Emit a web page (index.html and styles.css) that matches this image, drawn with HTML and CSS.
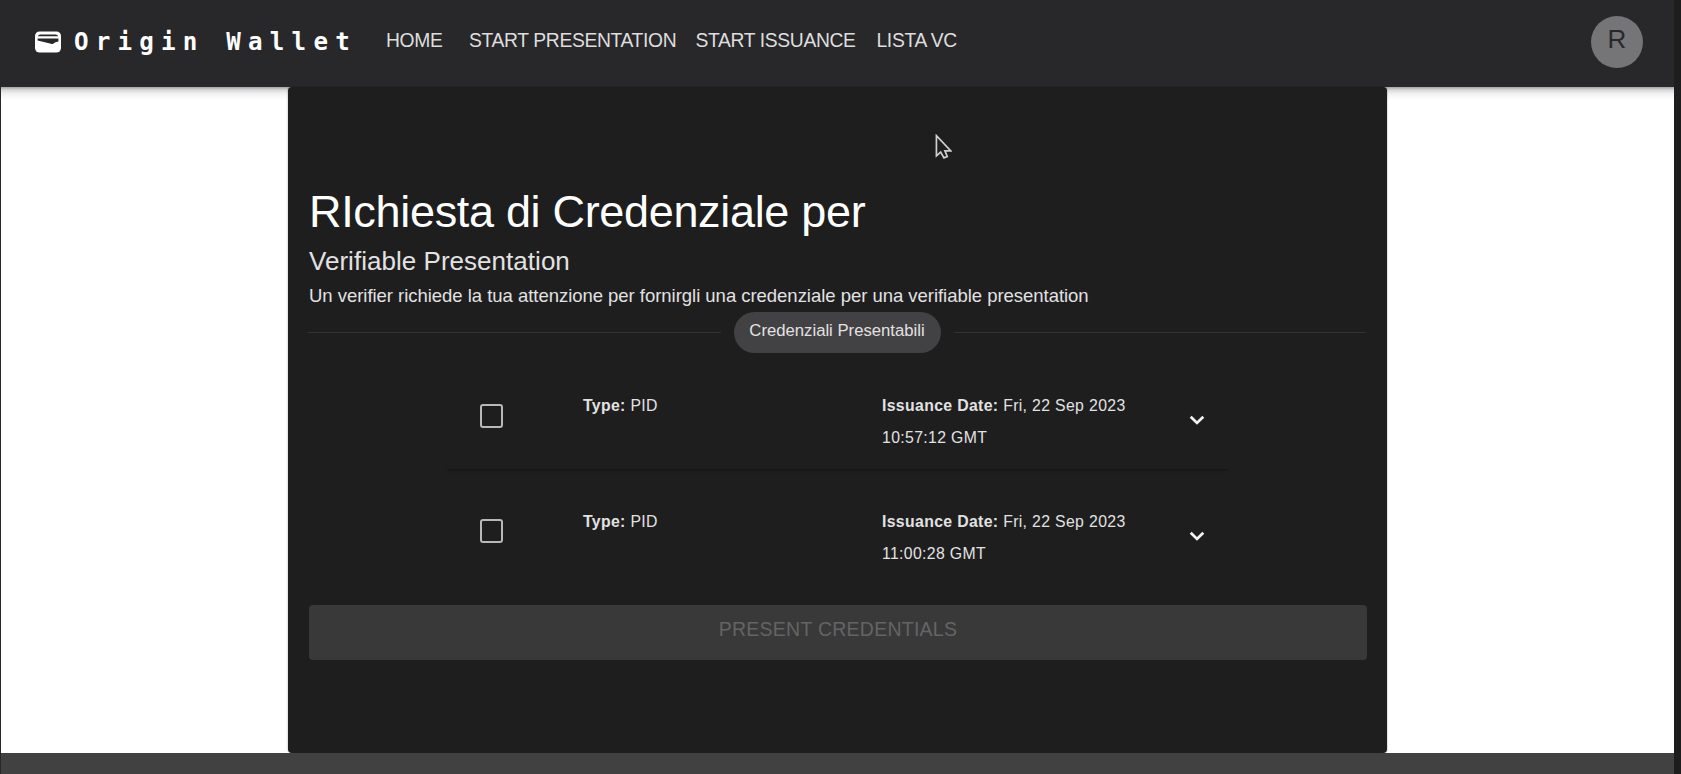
FILE: index.html
```html
<!DOCTYPE html>
<html lang="it">
<head>
<meta charset="utf-8">
<title>Origin Wallet</title>
<link rel="stylesheet" href="styles.css">
</head>
<body>
<div class="app">
  <header class="bar">
    <svg class="logo" viewBox="0 0 26 22"><rect x="0" y="0.5" width="26" height="21" rx="4.5" fill="#fff"/><path d="M3 5.2Q3 3.4 5.5 3.4H20.5Q23 3.4 23 5.2Z" fill="#28282a"/><path d="M2.6 7.6H23.4V10.4Q20 10.8 18.5 12.4Q17.3 13.4 15 12.6L2.6 9.4Z" fill="#28282a"/></svg>
    <span class="brand">Origin Wallet</span>
    <nav class="nav"><a>HOME</a><a>START PRESENTATION</a><a>START ISSUANCE</a><a>LISTA VC</a></nav>
    <div class="avatar">R</div>
  </header>
  <main class="page">
    <section class="paper">
      <h1 class="title">RIchiesta di Credenziale per</h1>
      <h2 class="subtitle">Verifiable Presentation</h2>
      <p class="body">Un verifier richiede la tua attenzione per fornirgli una credenziale per una verifiable presentation</p>
      <div class="divider"><span class="chip">Credenziali Presentabili</span></div>
      <div class="list">
        <div class="row">
          <span class="check"></span>
          <p class="cell"><b>Type:</b> PID</p>
          <div class="cell"><p><b>Issuance Date:</b> Fri, 22 Sep 2023</p><p>10:57:12 GMT</p></div>
          <svg class="chevron" viewBox="0 0 16 10"><path d="M1.7 1.7L8 7.9L14.3 1.7" fill="none" stroke="#f2f2f2" stroke-width="2.8"/></svg>
        </div>
        <div class="row">
          <span class="check"></span>
          <p class="cell"><b>Type:</b> PID</p>
          <div class="cell"><p><b>Issuance Date:</b> Fri, 22 Sep 2023</p><p>11:00:28 GMT</p></div>
          <svg class="chevron" viewBox="0 0 16 10"><path d="M1.7 1.7L8 7.9L14.3 1.7" fill="none" stroke="#f2f2f2" stroke-width="2.8"/></svg>
        </div>
      </div>
      <button class="present" disabled>PRESENT CREDENTIALS</button>
    </section>
  </main>
  <footer class="footer"></footer>
  <svg class="cursor" viewBox="0 0 18 27"><path d="M1.5 1.5V23L6 19L9.5 25L13 23.5L10.5 17.5H16.5Z" fill="#1e1e1e" stroke="#d0d0d0" stroke-width="1.8"/></svg>
</div>
</body>
</html>
```
FILE: styles.css
```css
* { box-sizing: border-box; }
body { margin: 0; background: #1d1d1e; font-family: "Liberation Sans", Arial, sans-serif; }
h1, h2, p { margin: 0; font-weight: 400; }
.app { width: 1674px; height: 774px; display: flex; flex-direction: column; position: relative; border-left: 1px solid #2b2428; overflow: hidden; }
.bar { height: 87px; flex: none; display: flex; align-items: flex-start; background: #28282a; padding: 16px 31px 0 34px; }
.logo { width: 26px; height: 22px; margin-top: 15px; }
.brand { margin-left: 13px; width: 312px; font: 700 24.2px/30px "DejaVu Sans Mono", monospace; letter-spacing: 7.2px; color: #fff; margin-top: 11px; white-space: nowrap; }
.nav { display: grid; grid-template-columns: 83px 226.5px 181px auto; margin-top: 14px; font-size: 19.3px; line-height: 21px; letter-spacing: -.35px; color: #dedede; white-space: nowrap; }
.avatar { margin-left: auto; width: 52px; height: 52px; border-radius: 50%; background: #757477; color: #28282a; font-size: 26px; line-height: 47px; text-align: center; }
.page { height: 666px; flex: none; background: linear-gradient(#a5a5a8, #d8d8da 3px, #f2f2f3 7px, #fff 13px); display: flex; padding-left: 287px; }
.paper { width: 1099px; background: #1e1e1e; border-radius: 4px; padding: 98px 20px 0 21px; color: #e2e2e2; box-shadow: 0 0 2px rgba(0,0,0,.4); }
.title { font-size: 45px; line-height: 54px; letter-spacing: -.32px; color: #fff; white-space: nowrap; }
.subtitle { font-size: 26px; line-height: 32px; margin-top: 6px; letter-spacing: .03px; white-space: nowrap; }
.body { font-size: 18.5px; line-height: 24px; letter-spacing: -.03px; margin-top: 7px; white-space: nowrap; }
.divider { display: flex; align-items: center; gap: 13px; margin: 3px 1px 0 -1px; height: 42px; }
.divider::before, .divider::after { content: ""; flex: 1; height: 1px; background: #333; }
.chip { width: 207px; height: 41px; border-radius: 21px; background: #424143; text-align: center; font-size: 16.7px; line-height: 37px; white-space: nowrap; }
.list { width: 786px; margin: 0 auto; }
.row { height: 116px; display: grid; grid-template-columns: 136px 299px 307px 16px; padding: 37px 0 0 2px; }
.row:first-child { box-shadow: 0 4px 3px -3px rgba(0,0,0,.4); }
.check { width: 23.5px; height: 23.5px; margin: 14px 0 0 32.5px; border: 2.5px solid #b8b8b8; border-radius: 3px; }
.row + .row .check { margin-top: 13px; }
.cell { font-size: 15.8px; line-height: 32.4px; letter-spacing: .35px; white-space: nowrap; }
.chevron { width: 16px; height: 10px; margin-top: 25px; }
.present { display: block; width: 1058px; height: 55px; margin-top: 20px; padding: 0 0 7px; border: 0; border-radius: 4px; background: #393939; color: #646466; font: 19.5px/22px "Liberation Sans", Arial, sans-serif; letter-spacing: .25px; }
.footer { flex: 1; background: #414141; }
.cursor { position: absolute; left: 934px; top: 134px; width: 17px; height: 26px; }
```
